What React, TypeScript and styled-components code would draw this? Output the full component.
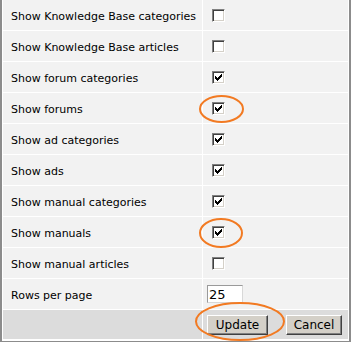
import React from "react";
import styled, { createGlobalStyle } from "styled-components";

const GlobalStyle = createGlobalStyle`
  html, body {
    margin: 0;
    padding: 0;
    background: #ffffff;
  }
  body {
    font-family: "DejaVu Sans", Verdana, sans-serif;
    font-size: 11px;
    color: #000;
  }
`;

const Panel = styled.div`
  position: relative;
  width: 345px;
  border: 2px solid #8c8c8c;
  border-top: none;
  background: #ffffff;
  padding: 0 1px 1px 1px;
`;

const Grid = styled.div`
  display: grid;
  grid-template-columns: 199px 1fr;
  grid-auto-rows: 30px;
  gap: 1px;
`;

const Label = styled.div`
  background: #f2f2f2;
  display: flex;
  align-items: center;
  padding-left: 8px;
  padding-top: 3px;
  white-space: nowrap;
`;

const Field = styled.div<{ $pad?: number }>`
  background: #f2f2f2;
  display: flex;
  align-items: center;
  padding-left: ${(p) => p.$pad ?? 9}px;
`;

const Footer = styled.div`
  background: #dcdcdc;
  height: 29px;
`;

const FooterActions = styled.div`
  background: #dcdcdc;
  height: 29px;
  display: flex;
  align-items: center;
  padding-left: 4px;
  gap: 18px;
`;

const Box = styled.span`
  box-sizing: border-box;
  width: 13px;
  height: 13px;
  background: #ffffff;
  border-top: 1px solid #808080;
  border-left: 1px solid #808080;
  border-right: 1px solid #ffffff;
  border-bottom: 1px solid #ffffff;
  box-shadow: inset 1px 1px 0 #404040, inset -1px -1px 0 #d4d0c8;
  display: flex;
  align-items: center;
  justify-content: center;
`;

const TextInput = styled.input`
  box-sizing: border-box;
  width: 36px;
  height: 18px;
  border: 1px solid #9a9a9a;
  border-right-color: #d8d8d8;
  border-bottom-color: #d8d8d8;
  padding: 0 1px;
  font-family: "DejaVu Sans", Verdana, sans-serif;
  font-size: 13px;
  background: #fff;
  outline: none;
`;

const Button = styled.button<{ $w: number }>`
  box-sizing: border-box;
  width: ${(p) => p.$w}px;
  height: 20px;
  padding: 1px 0 0;
  background: #d4d0c8;
  border: 1px solid;
  border-color: #ffffff #404040 #404040 #ffffff;
  box-shadow: inset -1px -1px 0 #808080;
  font-family: "DejaVu Sans", Verdana, sans-serif;
  font-size: 12px;
  color: #000;
`;

const Ring = styled.svg`
  position: absolute;
  overflow: visible;
  pointer-events: none;
`;

type Row = { label: string; checked: boolean };

const rows: Row[] = [
  { label: "Show Knowledge Base categories", checked: false },
  { label: "Show Knowledge Base articles", checked: false },
  { label: "Show forum categories", checked: true },
  { label: "Show forums", checked: true },
  { label: "Show ad categories", checked: true },
  { label: "Show ads", checked: true },
  { label: "Show manual categories", checked: true },
  { label: "Show manuals", checked: true },
  { label: "Show manual articles", checked: false },
];

function Checkbox({ checked }: { checked: boolean }) {
  return (
    <Box>
      {checked && (
        <svg width="7" height="7" viewBox="0 0 7 7">
          <path d="M0 2h1v1h1v1h1v-1h1v-1h1v-1h1v-1h1v3h-1v1h-1v1h-1v1h-1v1h-1v-1h-1v-1h-1z" fill="#000" />
        </svg>
      )}
    </Box>
  );
}

function Ellipse({ x, y, w, h }: { x: number; y: number; w: number; h: number }) {
  return (
    <Ring width={w} height={h} style={{ left: x, top: y }}>
      <ellipse cx={w / 2} cy={h / 2} rx={w / 2 - 1} ry={h / 2 - 1} fill="none" stroke="#f27a22" strokeWidth="2" />
    </Ring>
  );
}

export default function App() {
  return (
    <>
      <GlobalStyle />
      <Panel>
        <Grid>
          {rows.map((r) => (
            <React.Fragment key={r.label}>
              <Label>{r.label}</Label>
              <Field>
                <Checkbox checked={r.checked} />
              </Field>
            </React.Fragment>
          ))}
          <Label>Rows per page</Label>
          <Field $pad={4}>
            <TextInput defaultValue="25" />
          </Field>
          <Footer />
          <FooterActions>
            <Button $w={61}>Update</Button>
            <Button $w={56}>Cancel</Button>
          </FooterActions>
        </Grid>
        <Ellipse x={197} y={95} w={45} h={28} />
        <Ellipse x={197} y={218} w={44} h={30} />
        <Ellipse x={193} y={302} w={90} h={39} />
      </Panel>
    </>
  );
}
